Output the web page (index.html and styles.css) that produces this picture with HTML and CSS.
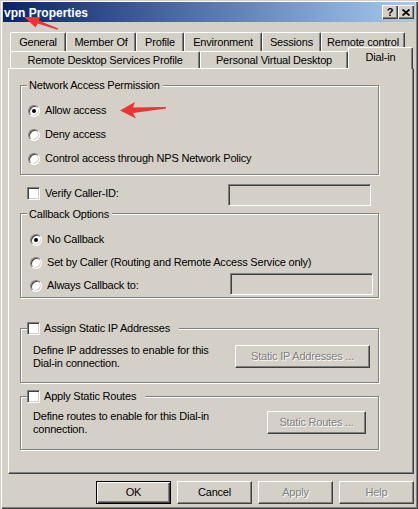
FILE: index.html
```html
<!DOCTYPE html>
<html>
<head>
<meta charset="utf-8">
<title>vpn Properties</title>
<link rel="stylesheet" href="styles.css">
</head>
<body>
<div class="window">
  <div class="titlebar">
    <span class="title">vpn Properties</span>
    <div class="tbtns">
      <span class="tbtn help">?</span>
      <span class="tbtn close"><svg width="8" height="7" viewBox="0 0 8 7"><path d="M0.5 0.5 L7.5 6.5 M7.5 0.5 L0.5 6.5" stroke="#000" stroke-width="1.7" fill="none"/></svg></span>
    </div>
  </div>

  <div class="tabs">
    <div class="tabrow row1">
      <div class="tab t-general">General</div>
      <div class="tab t-member">Member Of</div>
      <div class="tab t-profile">Profile</div>
      <div class="tab t-env">Environment</div>
      <div class="tab t-sess">Sessions</div>
      <div class="tab t-remote">Remote control</div>
    </div>
    <div class="tabrow row2">
      <div class="tab t-rds">Remote Desktop Services Profile</div>
      <div class="tab t-pvd">Personal Virtual Desktop</div>
      <div class="tab t-dial sel">Dial-in</div>
    </div>
  </div>

  <div class="panel">
    <div class="group g1">
      <span class="gtitle">Network Access Permission</span>
      <div class="opts">
        <div class="opt"><span class="radio on"></span><span>Allow access</span></div>
        <div class="opt"><span class="radio"></span><span>Deny access</span></div>
        <div class="opt"><span class="radio"></span><span>Control access through NPS Network Policy</span></div>
      </div>
    </div>

    <div class="verify">
      <div class="chkline"><span class="chk"></span><span>Verify Caller-ID:</span></div>
      <span class="field f1"></span>
    </div>

    <div class="group g2">
      <span class="gtitle gt2">Callback Options</span>
      <div class="opts opts2">
        <div class="opt"><span class="radio on"></span><span>No Callback</span></div>
        <div class="opt"><span class="radio"></span><span>Set by Caller (Routing and Remote Access Service only)</span></div>
        <div class="opt"><span class="radio"></span><span>Always Callback to:</span><span class="field f2"></span></div>
      </div>
    </div>

    <div class="group g3">
      <span class="gtitle chkt"><span class="chk"></span><span>Assign Static IP Addresses</span></span>
      <div class="gbody">
        <p class="desc">Define IP addresses to enable for this<br>Dial-in connection.</p>
        <span class="btn dis b-ip">Static IP Addresses ...</span>
      </div>
    </div>

    <div class="group g4">
      <span class="gtitle chkt"><span class="chk"></span><span>Apply Static Routes</span></span>
      <div class="gbody">
        <p class="desc">Define routes to enable for this Dial-in<br>connection.</p>
        <span class="btn dis b-rt">Static Routes ...</span>
      </div>
    </div>
  </div>

  <div class="buttons">
    <span class="btn def">OK</span>
    <span class="btn">Cancel</span>
    <span class="btn dis">Apply</span>
    <span class="btn dis">Help</span>
  </div>
</div>

<svg class="annot" width="418" height="509" viewBox="0 0 418 509">
  <polygon fill="#ee3333" points="24,17 40.5,17 38.9,20.6 58.2,28.4 57.6,29.8 37.6,23.6 35.6,27.4"/>
  <polygon fill="#ee3333" points="120,110.5 135,102 133,107.5 166,107 166,108.6 133,113 136,118.5"/>
</svg>
</body>
</html>
```

FILE: styles.css
```css
* { box-sizing: border-box; }

html, body {
  margin: 0;
  padding: 0;
  background: #d4d0c8;
}

body {
  position: relative;
  width: 418px;
  height: 509px;
  overflow: hidden;
}

.window {
  width: 418px;
  height: 509px;
  padding: 2px 3px 3px 3px;
  background: #d4d0c8;
  box-shadow: inset 1px 1px 0 #d4d0c8, inset 2px 2px 0 #ffffff,
              inset -1px -1px 0 #404040, inset -2px -2px 0 #808080;
  font-family: "Liberation Sans", Arial, sans-serif;
  font-size: 11px;
  line-height: 13px;
  letter-spacing: -0.2px;
  color: #000;
}

/* title bar */
.titlebar {
  height: 20px;
  display: flex;
  align-items: center;
  justify-content: space-between;
  padding: 0 1px 0 1px;
  background: linear-gradient(to right, #0a246a, #a6caf0);
}

.title {
  color: #fff;
  font-weight: bold;
  font-size: 12px;
  line-height: 14px;
  letter-spacing: 0;
  padding-top: 1px;
}

.tbtns {
  display: flex;
  gap: 0;
}

.tbtn {
  width: 16px;
  height: 14px;
  display: flex;
  align-items: center;
  justify-content: center;
  background: #d4d0c8;
  box-shadow: inset 1px 1px 0 #ffffff, inset -1px -1px 0 #404040,
              inset -2px -2px 0 #808080;
  font-weight: bold;
  font-size: 11px;
  line-height: 12px;
  letter-spacing: 0;
}

.tbtn.help { padding-bottom: 1px; }

/* tabs */
.tabs {
  margin: 10px 0 0 7px;
}

.tabrow {
  display: flex;
}

.row1 { height: 19px; }

.row2 {
  height: 17px;
  align-items: flex-end;
}

.tab {
  background: #d4d0c8;
  border-top: 1px solid #fff;
  border-left: 1px solid #fff;
  border-right: 1px solid #404040;
  box-shadow: inset -1px 0 0 #808080;
  border-radius: 2px 2px 0 0;
  text-align: center;
  white-space: nowrap;
}

.row1 .tab { height: 19px; padding-top: 3px; }
.row2 .tab { height: 17px; padding-top: 2px; }

.row2 .tab.sel {
  height: 22px;
  padding-top: 3px;
  margin-bottom: -1px;
  position: relative;
  z-index: 1;
}

.t-general { width: 56px; }
.t-member { width: 70px; }
.t-profile { width: 48px; }
.t-env { width: 78px; }
.t-sess { width: 59px; }
.t-remote { width: 84px; }
.t-rds { width: 190px; }
.t-pvd { width: 148px; }
.t-dial { width: 65px; }

/* panel */
.panel {
  margin: 0 1px 0 5px;
  height: 406px;
  border: 1px solid;
  border-color: #fff #404040 #404040 #fff;
  box-shadow: inset -1px -1px 0 #808080;
  padding: 0 0 0 11px;
}

.group {
  position: relative;
  width: 359px;
  border: 1px solid #808080;
  box-shadow: inset 1px 1px 0 #fff, 1px 1px 0 #fff;
}

.gtitle {
  position: absolute;
  top: -7px;
  left: 6px;
  padding: 0 3px 0 2px;
  background: #d4d0c8;
  white-space: nowrap;
}

.gt2 { top: -6px; }

.gtitle.chkt {
  display: flex;
  align-items: center;
  gap: 4px;
  left: 6px;
  padding: 0 9px 0 0;
}

.g1 {
  margin-top: 16px;
  height: 90px;
  padding: 18px 0 0 7px;
}

.opts {
  display: flex;
  flex-direction: column;
  gap: 11px;
}

.opt {
  display: flex;
  align-items: center;
  height: 13px;
  white-space: nowrap;
}

.radio {
  position: relative;
  width: 12px;
  height: 12px;
  margin-right: 5px;
  border-radius: 50%;
  background: #fff;
  border: 1px solid;
  border-color: #808080 #fff #fff #808080;
  box-shadow: inset 1px 1px 0 #404040, inset -1px -1px 0 #d4d0c8;
  flex: none;
}

.radio.on::after {
  content: "";
  position: absolute;
  left: 3px;
  top: 3px;
  width: 4px;
  height: 4px;
  border-radius: 50%;
  background: #000;
}

.chk {
  width: 13px;
  height: 13px;
  flex: none;
  background: #fff;
  border: 1px solid;
  border-color: #808080 #fff #fff #808080;
  box-shadow: inset 1px 1px 0 #404040, inset -1px -1px 0 #d4d0c8;
}

.verify {
  display: flex;
  width: 359px;
  height: 22px;
  margin-top: 9px;
  padding-left: 7px;
}

.chkline {
  display: flex;
  align-items: center;
  gap: 5px;
  height: 13px;
  margin-top: 3px;
}

.field {
  display: block;
  margin-left: auto;
  width: 143px;
  height: 22px;
  flex: none;
  background: #d4d0c8;
  border: 1px solid;
  border-color: #808080 #fff #fff #808080;
  box-shadow: inset 1px 1px 0 #404040, inset -1px -1px 0 #d4d0c8;
}

.f1 { margin-right: 8px; }
.f2 { margin-right: 5px; margin-bottom: 3px; }

.g2 {
  margin-top: 7px;
  height: 85px;
  padding: 19px 0 0 9px;
}

.opts2 { gap: 10px; }

.g3 {
  margin-top: 30px;
  height: 55px;
  padding: 15px 8px 0 12px;
}

.g4 {
  margin-top: 13px;
  height: 54px;
  padding: 13px 12px 0 12px;
}

.gbody {
  display: flex;
  justify-content: space-between;
  align-items: flex-start;
}

.desc {
  margin: 0;
  white-space: nowrap;
}

/* buttons */
.btn {
  width: 75px;
  height: 23px;
  display: flex;
  align-items: center;
  justify-content: center;
  background: #d4d0c8;
  border: 1px solid;
  border-color: #fff #404040 #404040 #fff;
  box-shadow: inset -1px -1px 0 #808080;
  white-space: nowrap;
}

.btn.def {
  border-color: #000;
  box-shadow: inset 1px 1px 0 #fff, inset -1px -1px 0 #404040,
              inset -2px -2px 0 #808080;
}

.btn.dis {
  color: #808080;
  text-shadow: 1px 1px 0 #fff;
}

.b-ip { width: 135px; margin-top: 1px; }
.b-rt { width: 99px; margin-top: 1px; }

.buttons {
  display: flex;
  justify-content: flex-end;
  gap: 6px;
  margin: 7px 1px 0 0;
}

/* annotation arrows */
.annot {
  position: absolute;
  left: 0;
  top: 0;
  pointer-events: none;
}
```
